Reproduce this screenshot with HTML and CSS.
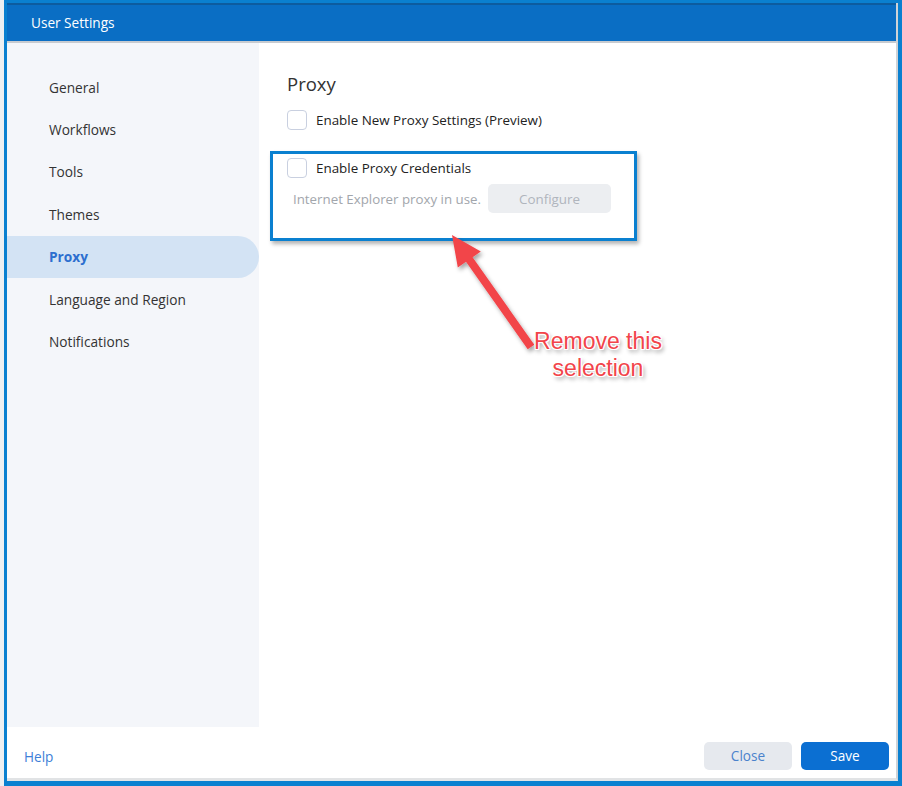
FILE: index.html
```html
<!DOCTYPE html>
<html lang="en">
<head>
    <meta charset="UTF-8">
    <title>User Settings</title>
    <link rel="stylesheet" href="styles.css">
</head>
<body>

    <!-- Dialog window -->
    <div class="frame">
        <div class="dialog">
            <div class="title-bar">User Settings</div>

            <div class="dialog-body">
                <ul class="side-nav">
                    <li>General</li>
                    <li>Workflows</li>
                    <li>Tools</li>
                    <li>Themes</li>
                    <li class="active">Proxy</li>
                    <li>Language and Region</li>
                    <li>Notifications</li>
                </ul>

                <div class="panel">
                    <h2 class="panel-title">Proxy</h2>
                    <label class="check-row">
                        <span class="checkbox"></span>
                        <span>Enable New Proxy Settings (Preview)</span>
                    </label>
                    <label class="check-row second">
                        <span class="checkbox"></span>
                        <span>Enable Proxy Credentials</span>
                    </label>
                    <div class="config-row">
                        <span class="hint">Internet Explorer proxy in use.</span>
                        <button class="btn-configure" disabled>Configure</button>
                    </div>
                </div>
            </div>

            <div class="dialog-footer">
                <a class="help-link">Help</a>
                <div class="footer-buttons">
                    <button class="btn btn-close">Close</button>
                    <button class="btn btn-save">Save</button>
                </div>
            </div>
        </div>
    </div>

    <!-- Annotation drawn over the screenshot -->
    <div class="callout-box"></div>
    <svg class="callout-arrow" width="902" height="786" viewBox="0 0 902 786">
        <defs>
            <filter id="arrowShadow" x="-20%" y="-20%" width="140%" height="140%">
                <feDropShadow dx="2" dy="3" stdDeviation="2" flood-color="#000" flood-opacity="0.35"/>
            </filter>
        </defs>
        <polygon filter="url(#arrowShadow)" fill="#f2444a"
            points="452,235 480.8,251.5 472.6,257.2 534.3,344.7 527.7,349.3 466,261.8 457.8,267.5"/>
    </svg>
    <div class="callout-text">Remove this<br>selection</div>

</body>
</html>
```

FILE: styles.css
```css
/* Basic Reset */
* {
    margin: 0;
    padding: 0;
    box-sizing: border-box;
}

body {
    position: relative;
    width: 902px;
    height: 786px;
    overflow: hidden;
    background: #eef0f2;
    font-family: 'Open Sans', 'Noto Sans', sans-serif;
    font-size: 14px;
    color: #2b2b2b;
}

/* Window frame */
.frame {
    margin-left: 4px;
    height: 786px;
    border-style: solid;
    border-color: #0a80d0;
    border-width: 3px 4px 5px 3px;
}

.dialog {
    height: 100%;
    display: flex;
    flex-direction: column;
    background: #fff;
    border-right: 2px solid #cfd3d7;
    border-bottom: 3px solid #e1e3e5;
}

.title-bar {
    height: 40px;
    padding-left: 24px;
    padding-bottom: 2px;
    display: flex;
    align-items: center;
    background: #0a6ec4;
    border-top: 2px solid #0d5c9f;
    border-bottom: 2px solid #c7cbd0;
    color: #fff;
    font-size: 13.6px;
}

.dialog-body {
    flex: 1;
    display: flex;
}

/* Left navigation */
.side-nav {
    width: 252px;
    list-style: none;
    padding-top: 23px;
    background: #f4f6fa;
}

.side-nav li {
    height: 42.4px;
    padding-left: 42px;
    display: flex;
    align-items: center;
    font-size: 13.7px;
    color: #333;
}

.side-nav li.active {
    background: #d3e3f4;
    border-radius: 0 22px 22px 0;
    color: #2d6fcf;
    font-weight: bold;
}

/* Proxy panel */
.panel {
    flex: 1;
    padding: 29px 28px;
}

.panel-title {
    font-size: 18.5px;
    font-weight: normal;
    line-height: 24px;
    color: #333;
    margin-bottom: 14px;
}

.check-row {
    display: flex;
    align-items: center;
    gap: 9px;
    height: 20px;
    font-size: 13.4px;
    color: #222;
}

.check-row.second {
    margin-top: 28px;
}

.checkbox {
    width: 20px;
    height: 20px;
    border: 1.5px solid #c9d0e0;
    border-radius: 4px;
    background: #fff;
}

.config-row {
    display: flex;
    align-items: center;
    margin-top: 6px;
    padding-left: 6px;
}

.hint {
    font-size: 13.3px;
    color: #a2a6ac;
}

.btn-configure {
    width: 123px;
    height: 29px;
    margin-left: 7px;
    border: none;
    border-radius: 5px;
    background: #eceef1;
    color: #b0b5bd;
    font-family: inherit;
    font-size: 13.4px;
}

/* Footer */
.dialog-footer {
    height: 51px;
    display: flex;
    justify-content: space-between;
    align-items: center;
    padding: 6px 7px 0 17px;
}

.help-link {
    color: #3d7fd8;
    font-size: 13.6px;
    padding-top: 2px;
    cursor: pointer;
}

.footer-buttons {
    display: flex;
    gap: 9px;
}

.btn {
    width: 88px;
    height: 28px;
    border: none;
    border-radius: 5px;
    font-family: inherit;
    font-size: 13.6px;
    cursor: pointer;
}

.btn-close {
    background: #e6e9ee;
    color: #4a82cc;
}

.btn-save {
    background: #0b6fd2;
    color: #fff;
}

/* Annotation overlay */
.callout-box {
    position: absolute;
    left: 270px;
    top: 151px;
    width: 367px;
    height: 90px;
    border: 3px solid #0a80d0;
    box-shadow: 2px 3px 4px rgba(0, 0, 0, 0.3);
}

.callout-arrow {
    position: absolute;
    left: 0;
    top: 0;
}

.callout-text {
    position: absolute;
    left: 520px;
    top: 328px;
    width: 156px;
    text-align: center;
    font-family: 'Liberation Sans', Arial, sans-serif;
    font-size: 23px;
    line-height: 27px;
    color: #f2444a;
    text-shadow: 1px 0 0 #fff, -1px 0 0 #fff, 0 1px 0 #fff, 0 -1px 0 #fff,
        1px 1px 0 #fff, -1px -1px 0 #fff, 1px -1px 0 #fff, -1px 1px 0 #fff,
        2px 3px 4px rgba(0, 0, 0, 0.45);
}
```
